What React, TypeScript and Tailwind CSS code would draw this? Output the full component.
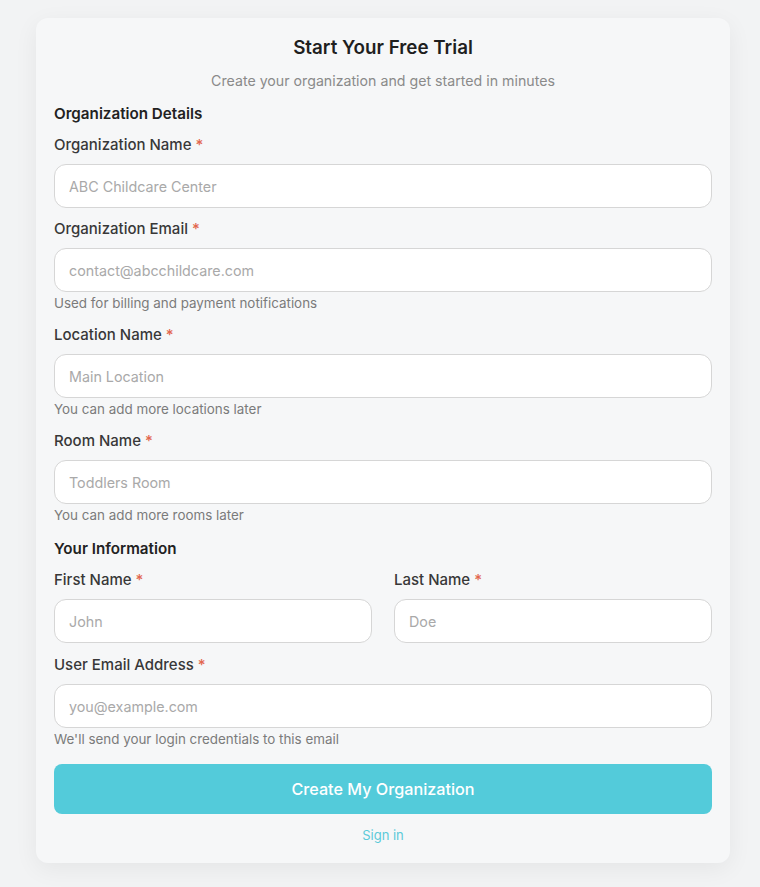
import type { ReactNode } from "react";

const Label = ({ children }: { children: ReactNode }) => (
  <label className="block text-[15px] leading-[22px] font-medium text-[#383838] mb-2">
    {children} <span className="text-[#e2664e]">*</span>
  </label>
);

const Input = ({ placeholder }: { placeholder: string }) => (
  <input
    placeholder={placeholder}
    className="w-full h-11 rounded-xl border border-[#d6d6d6] bg-white px-[14px] text-[14.3px] text-[#333] placeholder:text-[#a9a9a9] outline-none"
  />
);

const Helper = ({ children }: { children: ReactNode }) => (
  <p className="mt-[2px] text-[13.4px] leading-[18px] text-[#7b7b7b]">{children}</p>
);

const App = () => {
  return (
    <div
      className="min-h-screen bg-[#f2f3f4] pl-9 pr-[30px] pt-[18px] pb-6"
      style={{ fontFamily: "Inter, 'Noto Sans', sans-serif" }}
    >
      <div className="rounded-xl bg-[#f6f7f8] px-[18px] pt-4 pb-[19px] shadow-[0_6px_24px_rgba(0,0,0,0.06)]">
        <h1 className="text-center text-[18.8px] leading-[28px] font-semibold text-[#1f1f1f]">
          Start Your Free Trial
        </h1>
        <p className="mt-[9px] text-center text-[14.2px] leading-[20px] text-[#8a8a8a]">
          Create your organization and get started in minutes
        </p>

        <h2 className="mt-[11px] text-[15.2px] leading-[24px] font-semibold text-[#222]">
          Organization Details
        </h2>

        <div className="mt-2">
          <Label>Organization Name</Label>
          <Input placeholder="ABC Childcare Center" />
        </div>

        <div className="mt-[10px]">
          <Label>Organization Email</Label>
          <Input placeholder="contact@abcchildcare.com" />
          <Helper>Used for billing and payment notifications</Helper>
        </div>

        <div className="mt-3">
          <Label>Location Name</Label>
          <Input placeholder="Main Location" />
          <Helper>You can add more locations later</Helper>
        </div>

        <div className="mt-3">
          <Label>Room Name</Label>
          <Input placeholder="Toddlers Room" />
          <Helper>You can add more rooms later</Helper>
        </div>

        <h2 className="mt-[13px] text-[15.2px] leading-[24px] font-semibold text-[#222]">
          Your Information
        </h2>

        <div className="mt-2 grid grid-cols-2 gap-[22px]">
          <div>
            <Label>First Name</Label>
            <Input placeholder="John" />
          </div>
          <div>
            <Label>Last Name</Label>
            <Input placeholder="Doe" />
          </div>
        </div>

        <div className="mt-[11px]">
          <Label>User Email Address</Label>
          <Input placeholder="you@example.com" />
          <Helper>We'll send your login credentials to this email</Helper>
        </div>

        <button className="mt-4 h-[50px] w-full rounded-lg bg-[#53cbda] text-[16.2px] font-medium text-white">
          Create My Organization
        </button>

        <p className="mt-3 text-center text-[13px] leading-[18px] text-[#5ccad8]">
          <a href="#">Sign in</a>
        </p>
      </div>
    </div>
  );
};

export default App;
